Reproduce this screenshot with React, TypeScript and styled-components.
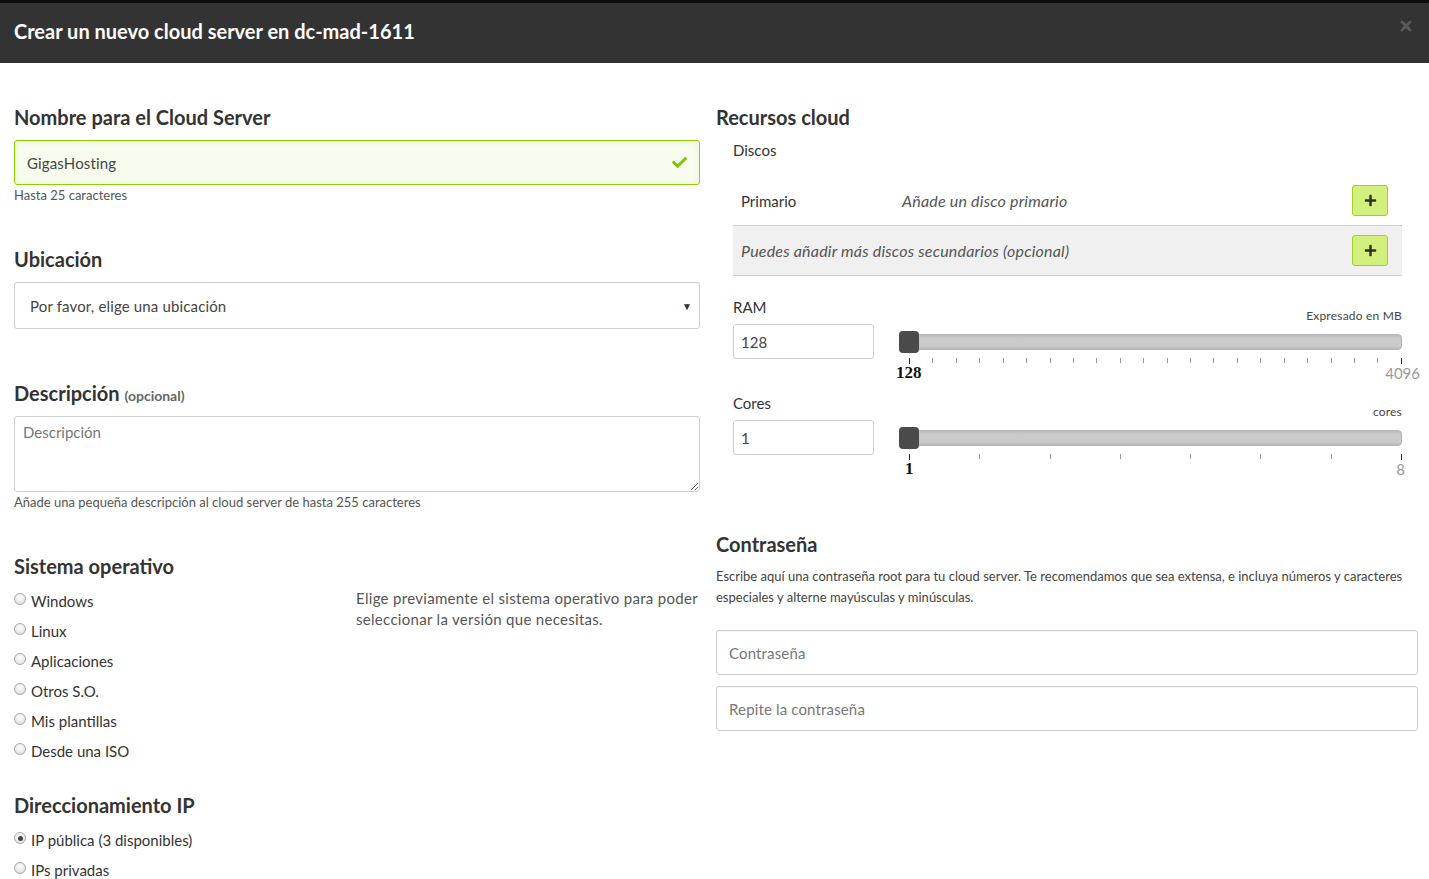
import React from 'react'
import styled, { createGlobalStyle } from 'styled-components'
import { FaCheck, FaTimes, FaPlus } from 'react-icons/fa'

const GlobalStyle = createGlobalStyle`
  html, body {
    margin: 0;
    padding: 0;
    background: #fff;
  }
  body {
    font-family: Lato, "Liberation Sans", sans-serif;
    color: #333;
  }
  * { box-sizing: border-box; }
`

const TopStrip = styled.div`
  height: 3px;
  background: #0e0e0e;
`

const Header = styled.header`
  height: 60px;
  background: #333;
  display: flex;
  align-items: center;
  justify-content: space-between;
  padding: 0 16px 4px 14px;
`

const Title = styled.h1`
  margin: 0;
  font-size: 20px;
  font-weight: 700;
  color: #fff;
`

const Close = styled.span`
  color: #5a5a5a;
  font-size: 16px;
  display: flex;
  align-self: flex-start;
  margin-top: 15px;
  margin-right: -1px;
`

const Body = styled.main`
  display: grid;
  grid-template-columns: 686px 702px;
  column-gap: 16px;
  padding: 0 11px 0 14px;
`

const Column = styled.div`
  display: flex;
  flex-direction: column;
  min-width: 0;
`

const Heading = styled.h2<{ $top: number }>`
  margin: ${p => p.$top}px 0 0;
  font-size: 20px;
  line-height: 24px;
  font-weight: 700;
  color: #333;
`

const Optional = styled.span`
  font-size: 14px;
  line-height: 1;
  color: #666;
`

const FieldBox = styled.div<{ $valid?: boolean; $height: number; $top: number }>`
  margin-top: ${p => p.$top}px;
  height: ${p => p.$height}px;
  display: flex;
  align-items: center;
  padding: 0 12px;
  border: 1px solid ${p => (p.$valid ? '#8fd100' : '#cfcfcf')};
  border-radius: 3px;
  background: ${p => (p.$valid ? '#f8fcef' : '#fff')};
  box-shadow: ${p => (p.$valid ? 'inset 0 0 6px rgba(143,209,0,0.15)' : 'inset 0 1px 1px rgba(0,0,0,0.04)')};
`

const TextInput = styled.input`
  flex: 1;
  border: none;
  outline: none;
  background: transparent;
  font-family: inherit;
  font-size: 15px;
  letter-spacing: 0.15px;
  color: #444;
  padding: 0;
  &::placeholder { color: #777; }
`

const CheckIcon = styled.span`
  color: #7cc400;
  font-size: 15px;
  display: flex;
`

const Help = styled.div`
  margin-top: 2px;
  font-size: 13px;
  line-height: 16px;
  color: #555;
`

const SelectBox = styled.div`
  margin-top: 11px;
  height: 47px;
  border: 1px solid #cfcfcf;
  border-radius: 3px;
  display: flex;
  align-items: center;
  justify-content: space-between;
  padding: 0 7px 0 15px;
  font-size: 15px;
  letter-spacing: 0.15px;
  color: #444;
`

const Caret = styled.span`
  font-size: 10px;
  color: #333;
`

const TextArea = styled.textarea`
  display: block;
  margin-top: 11px;
  height: 76px;
  width: 100%;
  border: 1px solid #cfcfcf;
  border-radius: 3px;
  padding: 6px 8px;
  font-family: inherit;
  font-size: 15px;
  color: #444;
  resize: vertical;
  outline: none;
  &::placeholder { color: #777; }
`

const OsGrid = styled.div`
  margin-top: 8px;
  display: grid;
  grid-template-columns: 342px 1fr;
`

const RadioList = styled.div<{ $top?: number }>`
  margin-top: ${p => p.$top ?? 0}px;
  display: flex;
  flex-direction: column;
`

const RadioRow = styled.label`
  height: 30px;
  display: flex;
  align-items: center;
  gap: 5px;
  font-size: 15px;
  color: #333;
`

const RadioDot = styled.span<{ $checked?: boolean }>`
  width: 12px;
  height: 12px;
  border-radius: 50%;
  border: 1px solid #a8a8a8;
  background: radial-gradient(circle at 50% 35%, #fdfdfd 0%, #e6e6e6 70%, #d6d6d6 100%);
  display: flex;
  align-items: center;
  justify-content: center;
  margin-top: -4px;
  &::after {
    content: '';
    width: 5px;
    height: 5px;
    border-radius: 50%;
    background: ${p => (p.$checked ? '#444' : 'transparent')};
  }
`

const OsNote = styled.p`
  margin: 2px 0 0;
  font-size: 15px;
  letter-spacing: 0.3px;
  line-height: 21px;
  color: #555;
`

const SubLabel = styled.div<{ $top: number }>`
  margin: ${p => p.$top}px 0 0 17px;
  font-size: 15px;
  line-height: 20px;
  color: #333;
`

const DiskTable = styled.div`
  margin: 16px 16px 0 17px;
  display: flex;
  flex-direction: column;
`

const DiskRow = styled.div<{ $shaded?: boolean }>`
  height: 50px;
  display: flex;
  align-items: center;
  padding: 0 14px 0 8px;
  border-bottom: 1px solid #cfcfcf;
  background: ${p => (p.$shaded ? '#f0f0f0' : 'transparent')};
`

const DiskName = styled.span`
  width: 161px;
  font-size: 15px;
  color: #333;
`

const DiskHint = styled.span`
  flex: 1;
  font-size: 16px;
  letter-spacing: 0.2px;
  font-style: italic;
  color: #555;
`

const AddButton = styled.button`
  width: 36px;
  height: 31px;
  border: 1px solid #9bd12a;
  border-radius: 3px;
  background: #d3f07d;
  color: #2e2e2e;
  font-size: 13px;
  display: flex;
  align-items: center;
  justify-content: center;
  padding: 0;
`

const ResourceBlock = styled.div<{ $top: number }>`
  margin: ${p => p.$top}px 16px 0 17px;
  display: grid;
  grid-template-columns: 141px minmax(0, 1fr);
  column-gap: 25px;
`

const ResLabel = styled.div`
  font-size: 15px;
  line-height: 20px;
  color: #333;
`

const Unit = styled.div`
  text-align: right;
  font-size: 12px;
  letter-spacing: 0.2px;
  line-height: 16px;
  padding-top: 11px;
  color: #444;
`

const SmallInput = styled.input`
  height: 35px;
  width: 100%;
  border: 1px solid #cfcfcf;
  border-radius: 3px;
  padding: 0 7px;
  font-family: inherit;
  font-size: 15px;
  color: #444;
  outline: none;
`

const Slider = styled.div`
  display: flex;
  flex-direction: column;
  min-width: 0;
`

const Track = styled.div`
  margin-top: 10px;
  height: 16px;
  border-radius: 4px;
  border: 1px solid #b4b4b4;
  background: linear-gradient(#bdbdbd 0%, #cacaca 25%, #c9c9c9 80%, #b9b9b9 100%);
  display: flex;
  align-items: center;
`

const Handle = styled.span`
  width: 20px;
  height: 22px;
  border-radius: 4px;
  background: #4a4a4a;
  margin-left: -1px;
`

const Ticks = styled.div`
  margin: 8px 0 0 10px;
  display: flex;
  justify-content: space-between;
  width: 493px;
`

const Tick = styled.span<{ $strong?: boolean }>`
  width: 1px;
  height: ${p => (p.$strong ? 6 : 5)}px;
  background: ${p => (p.$strong ? '#222' : '#999')};
`

const TickLabels = styled.div<{ $wide: boolean }>`
  margin-top: -1px;
  display: flex;
  justify-content: space-between;
  align-items: center;
  width: ${p => (p.$wide ? 524 : 500)}px;
  margin-left: ${p => (p.$wide ? -3 : 6)}px;
`

const MinLabel = styled.span`
  font-family: "Liberation Serif", serif;
  font-weight: 700;
  font-size: 17px;
  color: #111;
`

const MaxLabel = styled.span`
  font-size: 15px;
  color: #999;
`

const PwText = styled.p`
  margin: 10px 0 0;
  font-size: 13px;
  line-height: 21px;
  color: #444;
`

function Radio({ label, checked }: { label: string; checked?: boolean }) {
  return (
    <RadioRow>
      <RadioDot $checked={checked} />
      {label}
    </RadioRow>
  )
}

function ResourceSlider({
  label,
  unit,
  value,
  min,
  max,
  ticks,
  top,
}: {
  label: string
  unit: string
  value: string
  min: string
  max: string
  ticks: number
  top: number
}) {
  return (
    <ResourceBlock $top={top}>
      <ResLabel>{label}</ResLabel>
      <Unit>{unit}</Unit>
      <SmallInput defaultValue={value} />
      <Slider>
        <Track>
          <Handle />
        </Track>
        <Ticks>
          {Array.from({ length: ticks }).map((_, i) => (
            <Tick key={i} $strong={i === 0 || i === ticks - 1} />
          ))}
        </Ticks>
        <TickLabels $wide={max.length > 1}>
          <MinLabel>{min}</MinLabel>
          <MaxLabel>{max}</MaxLabel>
        </TickLabels>
      </Slider>
    </ResourceBlock>
  )
}

export default function App() {
  return (
    <>
      <GlobalStyle />
      <TopStrip />
      <Header>
        <Title>Crear un nuevo cloud server en dc-mad-1611</Title>
        <Close>
          <FaTimes />
        </Close>
      </Header>
      <Body>
        <Column>
          <Heading $top={42}>Nombre para el Cloud Server</Heading>
          <FieldBox $valid $height={45} $top={11}>
            <TextInput defaultValue="GigasHosting" />
            <CheckIcon>
              <FaCheck />
            </CheckIcon>
          </FieldBox>
          <Help>Hasta 25 caracteres</Help>

          <Heading $top={44}>Ubicación</Heading>
          <SelectBox>
            <span>Por favor, elige una ubicación</span>
            <Caret>▼</Caret>
          </SelectBox>

          <Heading $top={52}>
            Descripción <Optional>(opcional)</Optional>
          </Heading>
          <TextArea placeholder="Descripción" />
          <Help>Añade una pequeña descripción al cloud server de hasta 255 caracteres</Help>

          <Heading $top={44}>Sistema operativo</Heading>
          <OsGrid>
            <RadioList>
              <Radio label="Windows" />
              <Radio label="Linux" />
              <Radio label="Aplicaciones" />
              <Radio label="Otros S.O." />
              <Radio label="Mis plantillas" />
              <Radio label="Desde una ISO" />
            </RadioList>
            <OsNote>
              Elige previamente el sistema operativo para poder
              <br />
              seleccionar la versión que necesitas.
            </OsNote>
          </OsGrid>

          <Heading $top={27}>Direccionamiento IP</Heading>
          <RadioList $top={8}>
            <Radio label="IP pública (3 disponibles)" checked />
            <Radio label="IPs privadas" />
          </RadioList>
        </Column>

        <Column>
          <Heading $top={42}>Recursos cloud</Heading>
          <SubLabel $top={11}>Discos</SubLabel>
          <DiskTable>
            <DiskRow>
              <DiskName>Primario</DiskName>
              <DiskHint>Añade un disco primario</DiskHint>
              <AddButton>
                <FaPlus />
              </AddButton>
            </DiskRow>
            <DiskRow $shaded>
              <DiskHint>Puedes añadir más discos secundarios (opcional)</DiskHint>
              <AddButton>
                <FaPlus />
              </AddButton>
            </DiskRow>
          </DiskTable>

          <ResourceSlider top={21} label="RAM" unit="Expresado en MB" value="128" min="128" max="4096" ticks={22} />
          <ResourceSlider top={10} label="Cores" unit="cores" value="1" min="1" max="8" ticks={8} />

          <Heading $top={53}>Contraseña</Heading>
          <PwText>
            Escribe aquí una contraseña root para tu cloud server. Te recomendamos que sea extensa, e incluya números y caracteres
            especiales y alterne mayúsculas y minúsculas.
          </PwText>
          <FieldBox $height={45} $top={22}>
            <TextInput placeholder="Contraseña" />
          </FieldBox>
          <FieldBox $height={45} $top={11}>
            <TextInput placeholder="Repite la contraseña" />
          </FieldBox>
        </Column>
      </Body>
    </>
  )
}
